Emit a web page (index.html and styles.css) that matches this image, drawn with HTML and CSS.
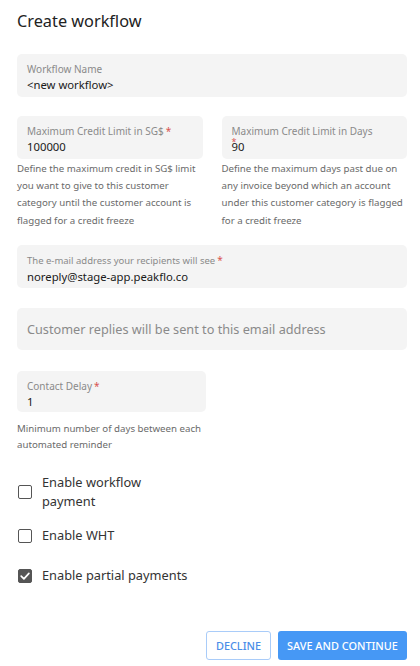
FILE: index.html
```html
<!DOCTYPE html>
<html>
<head>
<meta charset="utf-8">
<link rel="stylesheet" href="styles.css">
</head>
<body>
<div class="page">
  <h1 class="title">Create workflow</h1>

  <div class="field full f-name">
    <div class="label">Workflow Name</div>
    <div class="value">&lt;new workflow&gt;</div>
  </div>

  <div class="row2">
    <div class="col">
      <div class="field">
        <div class="label">Maximum Credit Limit in SG$<span class="req">*</span></div>
        <div class="value">100000</div>
      </div>
      <p class="help">Define the maximum credit in SG$ limit you want to give to this customer category until the customer account is flagged for a credit freeze</p>
    </div>
    <div class="col">
      <div class="field">
        <div class="label">Maximum Credit Limit in Days<span class="req wrapreq">*</span></div>
        <div class="value">90</div>
      </div>
      <p class="help">Define the maximum days past due on any invoice beyond which an account under this customer category is flagged for a credit freeze</p>
    </div>
  </div>

  <div class="field full f-email">
    <div class="label small">The e-mail address your recipients will see<span class="req">*</span></div>
    <div class="value">noreply@stage-app.peakflo.co</div>
  </div>

  <div class="field full f-reply">
    <div class="placeholder">Customer replies will be sent to this email address</div>
  </div>

  <div class="delay">
    <div class="field">
      <div class="label">Contact Delay<span class="req">*</span></div>
      <div class="value">1</div>
    </div>
    <p class="help help2">Minimum number of days between each automated reminder</p>
  </div>

  <div class="checks">
    <label class="check c1"><span class="box"></span><span class="ctext narrow">Enable workflow payment</span></label>
    <label class="check c2"><span class="box"></span><span class="ctext">Enable WHT</span></label>
    <label class="check c3"><span class="box checked"><svg viewBox="0 0 14 14" width="14" height="14"><path d="M3.2 7.2 L5.9 9.8 L10.9 4.4" fill="none" stroke="#fff" stroke-width="1.7" stroke-linecap="round" stroke-linejoin="round"/></svg></span><span class="ctext">Enable partial payments</span></label>
  </div>

  <div class="actions">
    <button class="btn outline">DECLINE</button>
    <button class="btn primary">SAVE AND CONTINUE</button>
  </div>
</div>
</body>
</html>
```

FILE: styles.css
```css
* { box-sizing: border-box; }
html, body { margin: 0; padding: 0; background: #fff; }
body { font-family: "Noto Sans", "Open Sans", sans-serif; color: #222; }
.page { width: 420px; padding: 0 13px 0 17px; }
.title { font-size: 16.3px; font-weight: 400; color: #222; margin: 0; padding-top: 10px; line-height: 22px; height: 54px; }
.field { background: #f4f4f4; border-radius: 5px; padding: 8px 10px 0 10px; position: relative; }
.full { width: 390px; }
.f-name { height: 43px; }
.label { font-size: 10px; color: #8a8a8a; line-height: 14px; white-space: nowrap; }
.label.small { font-size: 9.5px; }
.value { font-size: 11.3px; color: #1a1a1a; line-height: 17px; }
.req { color: #d9534f; font-size: 10px; margin-left: 2px; }
.wrapreq { position: absolute; left: 10px; top: 19px; margin: 0; font-size: 9px; }
.row2 { display: flex; gap: 19px; margin-top: 19px; }
.col { width: 186px; }
.row2 .field { height: 43px; }
.help { margin: 1px 0 0 0; font-size: 9.7px; line-height: 17.2px; color: #6a6a6a; }
.f-email { margin-top: 16px; height: 43px; }
.f-reply { margin-top: 20px; height: 42px; padding-top: 0; display: flex; align-items: center; }
.placeholder { font-size: 12.7px; color: #8a8a8a; }
.delay { margin-top: 21px; width: 189px; }
.delay .field { height: 41px; }
.help2 { margin-top: 9px; line-height: 16.5px; }
.checks { margin-top: 19px; display: flex; flex-direction: column; }
.check { display: flex; align-items: center; gap: 10px; font-size: 12.8px; color: #333; padding-left: 1px; }
.ctext { line-height: 19.5px; }
.narrow { width: 110px; }
.box { width: 14px; height: 14px; border: 1.6px solid #555; border-radius: 2px; display: inline-flex; flex: none; }
.box.checked { background: #555; border-color: #555; align-items: center; justify-content: center; }
.box.checked svg { flex: none; }
.c2 { margin-top: 14px; }
.c3 { margin-top: 21px; }
.actions { display: flex; justify-content: flex-end; gap: 7px; margin-top: 45px; width: 390px; }
.btn { font-family: "Noto Sans", "Open Sans", sans-serif; font-size: 10.9px; font-weight: 500; height: 29px; border-radius: 3px; cursor: pointer; padding: 0; }
.outline { width: 65px; background: #fff; border: 1px solid #a9ccf9; color: #4a8de8; }
.primary { width: 129px; background: #4698f5; border: none; color: #fff; }
```
